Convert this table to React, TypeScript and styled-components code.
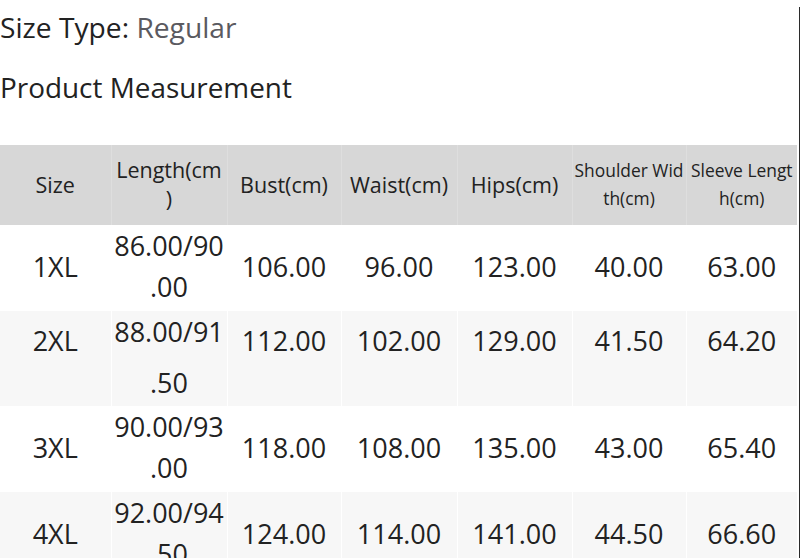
import styled, { createGlobalStyle } from "styled-components";

const GlobalStyle = createGlobalStyle`
  html, body {
    margin: 0;
    padding: 0;
    background: #fff;
  }
  body {
    font-family: "Open Sans", "Noto Sans", sans-serif;
    color: #222;
  }
`;

const Page = styled.div`
  width: 800px;
  min-height: 558px;
  box-sizing: border-box;
  border-right: 1px solid #2b2b2b;
`;

const Meta = styled.div`
  margin: 7px 0 0;
  font-size: 28.2px;
  line-height: 40px;
  .value {
    color: #5a5a60;
  }
`;

const Title = styled.h2`
  margin: 20px 0 0;
  font-size: 27.9px;
  font-weight: 400;
  line-height: 40px;
`;

const Table = styled.table`
  margin-top: 38px;
  width: 797px;
  table-layout: fixed;
  border-collapse: collapse;
  text-align: center;
`;

const HeadCell = styled.th<{ $small?: boolean }>`
  background: #d7d7d7;
  font-weight: 400;
  font-size: ${(p) => (p.$small ? "17.4px" : "21.5px")};
  line-height: ${(p) => (p.$small ? "28px" : "29px")};
  padding: 10px 0 12px;
  vertical-align: middle;
  white-space: nowrap;
  & + & {
    border-left: 1px solid #dedede;
  }
`;

const Row = styled.tr<{ $shade?: boolean }>`
  background: ${(p) => (p.$shade ? "#f7f7f7" : "#fff")};
`;

const Cell = styled.td<{ $tall?: boolean }>`
  font-size: 27px;
  line-height: 41px;
  padding: ${(p) => (p.$tall ? "0 0 37px" : "0 0 4px")};
  vertical-align: middle;
  white-space: nowrap;
  & + & {
    border-left: 1px solid #fff;
  }
`;

const LengthCell = styled(Cell)<{ $loose?: boolean }>`
  padding: ${(p) => (p.$loose ? "0 0 3px" : "0 0 4px")};
`;

const Line = styled.span<{ $gap?: number }>`
  display: block;
  margin-top: ${(p) => p.$gap || 0}px;
`;

const widths = [111, 116, 114, 116, 115, 114, 111];

const headers = [
  { lines: ["Size"] },
  { lines: ["Length(cm", ")"] },
  { lines: ["Bust(cm)"] },
  { lines: ["Waist(cm)"] },
  { lines: ["Hips(cm)"] },
  { lines: ["Shoulder Wid", "th(cm)"], small: true },
  { lines: ["Sleeve Lengt", "h(cm)"], small: true },
];

const rows = [
  { size: "1XL", length: ["86.00/90", ".00"], values: ["106.00", "96.00", "123.00", "40.00", "63.00"] },
  { size: "2XL", length: ["88.00/91", ".50"], values: ["112.00", "102.00", "129.00", "41.50", "64.20"], loose: true },
  { size: "3XL", length: ["90.00/93", ".00"], values: ["118.00", "108.00", "135.00", "43.00", "65.40"] },
  { size: "4XL", length: ["92.00/94", ".50"], values: ["124.00", "114.00", "141.00", "44.50", "66.60"] },
];

const App = () => {
  return (
    <Page>
      <GlobalStyle />
      <Meta>
        Size Type: <span className="value">Regular</span>
      </Meta>
      <Title>Product Measurement</Title>
      <Table>
        <colgroup>
          {widths.map((w, i) => (
            <col key={i} style={{ width: w }} />
          ))}
        </colgroup>
        <thead>
          <tr>
            {headers.map((h) => (
              <HeadCell key={h.lines[0]} $small={h.small}>
                {h.lines.map((l) => (
                  <Line key={l}>{l}</Line>
                ))}
              </HeadCell>
            ))}
          </tr>
        </thead>
        <tbody>
          {rows.map((r, i) => (
            <Row key={r.size} $shade={i % 2 === 1}>
              <Cell $tall={r.loose}>{r.size}</Cell>
              {/* length wraps onto two lines, row 2 has a looser break */}
              <LengthCell $loose={r.loose}>
                {r.length.map((l, k) => (
                  <Line key={k} $gap={k > 0 && r.loose ? 10 : 0}>
                    {l}
                  </Line>
                ))}
              </LengthCell>
              {r.values.map((v, j) => (
                <Cell key={j} $tall={r.loose}>
                  {v}
                </Cell>
              ))}
            </Row>
          ))}
        </tbody>
      </Table>
    </Page>
  );
};

export default App;
